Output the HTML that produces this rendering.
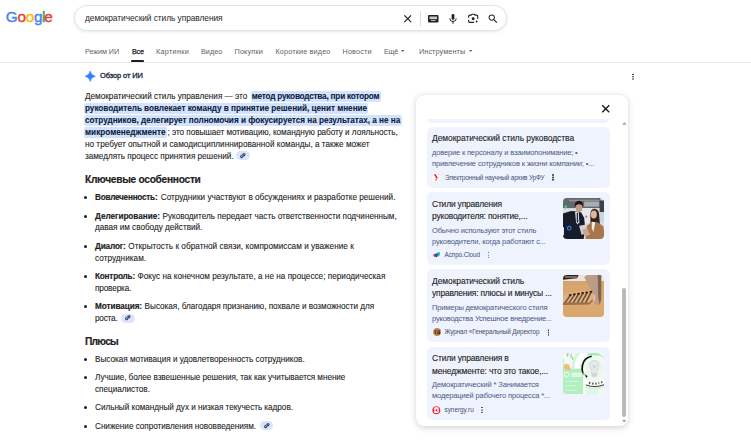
<!DOCTYPE html>
<html lang="ru">
<head>
<meta charset="utf-8">
<title>демократический стиль управления</title>
<style>
*{box-sizing:border-box;margin:0;padding:0}
html,body{width:751px;height:444px;overflow:hidden;background:#fff}
body{font-family:"Liberation Sans",sans-serif;color:#1f1f1f;position:relative}
.abs{position:absolute}
svg{position:absolute;overflow:visible}
.t{position:absolute;white-space:nowrap;line-height:1.117;font-size:10px;color:#1f1f1f}
.q{color:#1f1f1f}
.p,.li{-webkit-text-stroke:0.1px #1f1f1f}
.tab{color:#5f6368}
.act{color:#1f1f1f;-webkit-text-stroke:0.25px #1f1f1f}
.ov{font-weight:400;color:#1f2a44;-webkit-text-stroke:0.32px #1f2a44}
.hl{background:#d3e3fd;font-weight:700;color:#0a1d42;padding:0.8px 1.3px 0.8px 1.2px;margin:0 -1.3px 0 -1.2px;border-radius:2px}
.h{font-weight:700;-webkit-text-stroke:0.2px #1f1f1f}
.li b{font-weight:700;-webkit-text-stroke:0.18px #1f1f1f}
.ct{color:#1f1f1f;-webkit-text-stroke:0.12px #1f1f1f}
.cs{color:#4b5986}
.src{color:#434f74}
#logo span{position:absolute;top:8px;font-size:15.3px;line-height:1.117;-webkit-text-stroke:0.42px currentColor}
#sbox{left:74.4px;top:5.2px;width:433px;height:25.8px;border-radius:13px;background:#fff;border:0.6px solid #e3e5e9;box-shadow:0 1px 3px rgba(32,33,36,.11)}
#div1{left:420.2px;top:10.8px;width:0.7px;height:15px;background:#dadce0}
#act{left:131px;top:59.8px;width:13px;height:2.2px;background:#1f1f1f;border-radius:1.2px 1.2px 0 0}
#tabline{left:0;top:62px;width:751px;height:0.8px;background:#e9ebee}
.dot{position:absolute;left:84px;width:3px;height:3px;border-radius:50%;background:#1f1f1f}
.chip{position:absolute;width:13.6px;height:9px;border-radius:4.5px;background:#dae5fc}
.chip svg{left:4px;top:1.9px;width:5.6px;height:5.2px}
#panel{left:416px;top:94.5px;width:212.3px;height:331.4px;border-radius:8px;background:#fff;box-shadow:0 1.5px 6px rgba(0,0,0,.17),0 0 1px rgba(0,0,0,.08)}
.card{position:absolute;left:426.8px;width:183.3px;background:#eff3fd;border-radius:5.5px}
.img{position:absolute;left:562.7px;width:41.3px;height:41.3px;border-radius:4px;overflow:hidden}
.img svg{left:0;top:0;width:41.3px;height:41.3px}
.kb{position:absolute;width:1.6px;height:1.6px;border-radius:50%;background:#3a4466;box-shadow:0 2.4px 0 #3a4466,0 4.8px 0 #3a4466}
.ico{position:absolute;width:8px;height:8px}

</style>
</head>
<body>
<div id="logo" class="abs" style="left:0;top:0"><span style="left:5.8px;color:#4285f4">G</span><span style="left:17.6px;color:#ea4335">o</span><span style="left:25.8px;color:#fbbc05">o</span><span style="left:34.1px;color:#4285f4">g</span><span style="left:42.1px;color:#34a853">l</span><span style="left:44.3px;color:#ea4335">e</span></div>
<div id="sbox" class="abs"></div>
<!-- clear X -->
<svg style="left:404px;top:14.8px;width:7.4px;height:7.4px" viewBox="0 0 10 10"><path d="M1 1 L9 9 M9 1 L1 9" stroke="#1f1f1f" stroke-width="1.5" fill="none" stroke-linecap="square"/></svg>
<div id="div1" class="abs"></div>
<!-- keyboard -->
<svg style="left:427.5px;top:15px;width:10.5px;height:7.5px" viewBox="0 0 21 15"><rect x="0" y="0" width="21" height="15" rx="2" fill="#202124"/><rect x="3" y="3" width="15" height="5.4" fill="#c9cacc"/><rect x="6" y="10.3" width="9" height="1.6" fill="#d8d9da"/></svg>
<!-- mic -->
<svg style="left:448.5px;top:13.7px;width:8px;height:10.2px" viewBox="0 0 16 20"><rect x="5.2" y="0" width="5.6" height="11.5" rx="2.8" fill="#202124"/><path d="M1.6 8.5 a6.4 6.4 0 0 0 12.8 0" stroke="#202124" stroke-width="1.9" fill="none"/><rect x="7" y="14.5" width="2" height="5" fill="#202124"/></svg>
<!-- lens -->
<svg style="left:467.7px;top:14.2px;width:10.3px;height:9.2px" viewBox="0 0 21 18"><path d="M1.2 7.4 L1.2 4.8 Q1.2 2 4 2 L6.5 2 L8 0.2 L13 0.2 L14.5 2 L17 2 Q19.8 2 19.8 4.8 L19.8 9.6 M1.2 11.4 L1.2 14 Q1.2 16.8 4 16.8 L12.4 16.8" stroke="#202124" stroke-width="2.3" fill="none" stroke-linejoin="round"/><circle cx="10.5" cy="9.2" r="3" fill="#202124"/><circle cx="17.6" cy="15" r="1.9" fill="#202124"/></svg>
<!-- search -->
<svg style="left:488px;top:14.2px;width:9.8px;height:9.2px" viewBox="0 0 20 19"><circle cx="7.6" cy="7.4" r="5.5" stroke="#202124" stroke-width="2.1" fill="none"/><path d="M11.8 11.6 L18.2 17.8" stroke="#202124" stroke-width="2.4" stroke-linecap="butt"/></svg>
<!-- tab arrows -->
<svg style="left:401.4px;top:50.4px;width:3.4px;height:2px" viewBox="0 0 6 3.6"><path d="M0 0 H6 L3 3.6Z" fill="#5f6368"/></svg>
<svg style="left:469px;top:50.4px;width:3.4px;height:2px" viewBox="0 0 6 3.6"><path d="M0 0 H6 L3 3.6Z" fill="#5f6368"/></svg>
<div id="act" class="abs"></div>
<div id="tabline" class="abs"></div>
<!-- sparkle -->
<svg style="left:85.2px;top:70.6px;width:10.4px;height:10.4px" viewBox="0 0 20 20"><defs><linearGradient id="sg" x1="0" y1="1" x2="1" y2="0"><stop offset="0" stop-color="#3186ff"/><stop offset="0.6" stop-color="#2f7df5"/><stop offset="1" stop-color="#4f9bff"/></linearGradient></defs><path d="M10 0 Q11.6 8.4 20 10 Q11.6 11.6 10 20 Q8.4 11.6 0 10 Q8.4 8.4 10 0Z" fill="url(#sg)" stroke="url(#sg)" stroke-width="1.2" stroke-linejoin="round"/></svg>
<!-- page kebab -->
<div class="kb" style="left:632.3px;top:73.6px;width:1.7px;height:1.7px;background:#1f1f1f;box-shadow:0 2.3px 0 #1f1f1f,0 4.6px 0 #1f1f1f"></div>
<!-- bullets -->
<div class="dot" style="top:196px"></div>
<div class="dot" style="top:214.5px"></div>
<div class="dot" style="top:244.6px"></div>
<div class="dot" style="top:274.5px"></div>
<div class="dot" style="top:304.7px"></div>
<div class="dot" style="top:357.8px"></div>
<div class="dot" style="top:376.1px"></div>
<div class="dot" style="top:406.3px"></div>
<div class="dot" style="top:424.5px"></div>
<!-- link chips -->
<div class="chip" style="left:236.2px;top:151.3px"><svg viewBox="0 0 11 10"><path d="M4.6 6.4 L7.6 3.4 M5.2 2.8 L6.4 1.6 a2 2 0 0 1 2.9 2.9 L8.1 5.7 M5.8 7.2 L4.6 8.4 a2 2 0 0 1 -2.9 -2.9 L2.9 4.3" stroke="#404b6c" stroke-width="2.1" fill="none" stroke-linecap="round"/></svg></div>
<div class="chip" style="left:121px;top:313.6px"><svg viewBox="0 0 11 10"><path d="M4.6 6.4 L7.6 3.4 M5.2 2.8 L6.4 1.6 a2 2 0 0 1 2.9 2.9 L8.1 5.7 M5.8 7.2 L4.6 8.4 a2 2 0 0 1 -2.9 -2.9 L2.9 4.3" stroke="#404b6c" stroke-width="2.1" fill="none" stroke-linecap="round"/></svg></div>
<div class="chip" style="left:259.8px;top:421.3px"><svg viewBox="0 0 11 10"><path d="M4.6 6.4 L7.6 3.4 M5.2 2.8 L6.4 1.6 a2 2 0 0 1 2.9 2.9 L8.1 5.7 M5.8 7.2 L4.6 8.4 a2 2 0 0 1 -2.9 -2.9 L2.9 4.3" stroke="#404b6c" stroke-width="2.1" fill="none" stroke-linecap="round"/></svg></div>
<!-- side panel -->
<div id="panel" class="abs"></div>
<div class="card" style="top:116px;height:6.6px;border-radius:0 0 5.5px 5.5px"></div>
<div class="abs" style="left:420px;top:100px;width:200px;height:19px;background:#fff"></div>
<svg style="left:601.8px;top:105.4px;width:7.5px;height:7.5px" viewBox="0 0 10 10"><path d="M1 1 L9 9 M9 1 L1 9" stroke="#1f1f1f" stroke-width="1.9" fill="none" stroke-linecap="square"/></svg>
<div class="card" style="top:126.8px;height:60.8px"></div>
<div class="card" style="top:192px;height:72.6px"></div>
<div class="card" style="top:269.4px;height:73.1px"></div>
<div class="card" style="top:346.8px;height:73.1px"></div>
<!-- scrollbar -->
<svg style="left:621.5px;top:122.4px;width:4.8px;height:2.8px" viewBox="0 0 8 4.8"><path d="M0 4.8 L4 0 L8 4.8Z" fill="#a8a8a8"/></svg>
<div class="abs" style="left:622px;top:288px;width:3.7px;height:128.8px;border-radius:1.9px;background:#b9b9b9"></div>
<svg style="left:621.7px;top:419.8px;width:4.4px;height:2.5px" viewBox="0 0 8 4.8"><path d="M0 0 L4 4.8 L8 0Z" fill="#9c9c9c"/></svg>
<!-- kebabs in cards -->
<div class="kb" style="left:552.3px;top:174px"></div>
<div class="kb" style="left:487.8px;top:251.9px"></div>
<div class="kb" style="left:547.6px;top:329.2px"></div>
<div class="kb" style="left:481.3px;top:406.6px"></div>
<!-- thumbnails -->
<div class="img" style="top:197.7px"><svg viewBox="0 0 41 41"><defs><filter id="b1" x="-10%" y="-10%" width="120%" height="120%"><feGaussianBlur stdDeviation="0.6"/></filter></defs><g filter="url(#b1)"><rect x="-2" y="-2" width="45" height="45" fill="#d9dde1"/><rect x="-2" y="-2" width="45" height="12" fill="#62676c"/><rect x="6" y="1.6" width="32" height="1.6" fill="#8f9499"/><rect x="21" y="3.6" width="15" height="5" fill="#a9aeb3"/><rect x="36.4" y="-1" width="6" height="15" fill="#3c4147"/><rect x="37" y="-1" width="5" height="3.4" fill="#bfe9f4"/><rect x="36.4" y="14" width="6" height="10" fill="#c9d6de"/><rect x="19" y="10" width="10" height="15" fill="#e6e9ec"/><path d="M0 15.5 L8 13 L12.5 13.2 L18 14.5 L21 19.5 L22 30 L20.5 41 L0 41Z" fill="#161d2a"/><path d="M12 13.6 L15.6 13.8 L16.2 24 L14.4 26.4 L13 24Z" fill="#eceff2"/><path d="M13.6 14.6 L14.8 14.6 L15.2 23.4 L14.3 25 L13.6 23.4Z" fill="#1b2742"/><ellipse cx="16" cy="9.6" rx="3.2" ry="4.3" fill="#c09a84"/><path d="M11.6 8.8 Q11.2 3 16 2.8 Q20.6 3.2 19.8 8.6 Q18.6 5.8 15.6 6.2 Q12.8 6.6 11.6 8.8Z" fill="#1f1915"/><path d="M27.2 17 Q27 10.6 31.6 10.8 Q36 11 36 17.6 L36.6 26 L31.6 24 L27.2 24.6Z" fill="#34231b"/><ellipse cx="30.6" cy="16.4" rx="3" ry="4" fill="#dcb69f"/><path d="M22.4 41 L23.4 28 L28.4 23.6 L34.6 24.4 L40 28 L42 41Z" fill="#a9754c"/><path d="M28.6 23.6 L32 24 L30.2 34 L28.6 30Z" fill="#f0ebe5"/><path d="M16 27.6 L23 26.4 L24.6 35 L18.4 36.4Z" fill="#cdd1d6"/><path d="M19 31.4 L24.4 30.4 L27 36.6 L21.4 38.2Z" fill="#c9a48e"/><circle cx="6.2" cy="30" r="1.8" fill="none" stroke="#3c78e6" stroke-width="1.1"/><circle cx="23.2" cy="18.4" r="1.1" fill="#ef5a6a"/><path d="M1.6 6.6 L4.6 8.6 L1.6 10.8Z" fill="#3fd08f"/><rect x="0" y="29" width="1" height="8" fill="#dfe3e6"/></g></svg></div>
<div class="img" style="top:275.3px"><svg viewBox="0 0 41 41"><defs><filter id="b2" x="-10%" y="-10%" width="120%" height="120%"><feGaussianBlur stdDeviation="0.55"/></filter><linearGradient id="wd" x1="0" y1="0" x2="0" y2="1"><stop offset="0" stop-color="#d4a068"/><stop offset="0.6" stop-color="#dcab72"/><stop offset="1" stop-color="#d9a56a"/></linearGradient></defs><g filter="url(#b2)"><rect x="-2" y="-2" width="45" height="45" fill="url(#wd)"/><rect x="-2" y="-2" width="45" height="8" fill="#ece5dc"/><path d="M-1 -1 H16 L14 3.2 L0 4.6Z" fill="#2c211b"/><rect x="2" y="1.4" width="12" height="1.2" fill="#a99"/><path d="M0 6 H41 V9 H0Z" fill="#cfa474" opacity="0.8"/><path d="M21 2 Q24 -1 30 0 L37 -1 L36 12 Q37 22 35.5 30 L32 30 Q30 22 28 15 Q24 8 21 2Z" fill="#bb9d86"/><path d="M34.4 0 L38 0 L38 24 L36.4 30 L35 22Z" fill="#7d6354"/><path d="M30 19 L32 20 L31.6 26 L30 25Z" fill="#e7b8b4"/><g><path d="M0 21 L3 18.6 L26 15.2 L29.6 16.4 L29.6 24 L26 28.4 L0 29Z" fill="#ddb280"/><path d="M1.2 27.6 L6.8 19.6 L8.5 19.8 L2.8 27.6Z" fill="#6b4a34"/><ellipse cx="7.2" cy="19.8" rx="1.5" ry="1" fill="#3a2418"/><path d="M5.3 27.6 L10.9 19.0 L12.6 19.2 L6.9 27.6Z" fill="#6b4a34"/><ellipse cx="11.3" cy="19.2" rx="1.5" ry="1" fill="#3a2418"/><path d="M9.4 27.6 L15.0 18.4 L16.7 18.6 L11.0 27.6Z" fill="#6b4a34"/><ellipse cx="15.4" cy="18.6" rx="1.5" ry="1" fill="#3a2418"/><path d="M13.5 27.6 L19.1 17.7 L20.8 17.9 L15.1 27.6Z" fill="#6b4a34"/><ellipse cx="19.5" cy="17.9" rx="1.5" ry="1" fill="#3a2418"/><path d="M17.6 27.6 L23.2 17.1 L24.9 17.3 L19.2 27.6Z" fill="#6b4a34"/><ellipse cx="23.6" cy="17.3" rx="1.5" ry="1" fill="#3a2418"/><path d="M21.7 27.6 L27.3 16.5 L29.0 16.7 L23.3 27.6Z" fill="#6b4a34"/><ellipse cx="27.7" cy="16.7" rx="1.5" ry="1" fill="#3a2418"/><path d="M0 27.4 L26 27.4 L29.4 23.6 L29.4 26 L26.4 29.2 L0 29.8Z" fill="#8a6040" opacity="0.8"/></g></g></svg></div>
<div class="img" style="top:352.8px"><svg viewBox="0 0 41 41"><defs><filter id="b3" x="-10%" y="-10%" width="120%" height="120%"><feGaussianBlur stdDeviation="0.5"/></filter></defs><g filter="url(#b3)"><rect x="-2" y="-2" width="45" height="45" fill="#f0faf2"/><path d="M24.5 -1 H42 V7 Q40 3.4 36 2.6 L24.5 2.4Z" fill="#a3eab3"/><circle cx="30.5" cy="14.5" r="17" fill="none" stroke="#ffffff" stroke-width="4.6"/><circle cx="30.5" cy="14.5" r="20.6" fill="none" stroke="#d5f3db" stroke-width="2.4"/><rect x="-1" y="15.6" width="21.2" height="27" fill="#b2efbf"/><rect x="-1" y="6" width="2.2" height="10" fill="#bff2ca"/><circle cx="30.8" cy="14.6" r="10.6" fill="#ecf9ef"/><circle cx="31" cy="15" r="7.6" fill="none" stroke="#d9f2de" stroke-width="0.7"/><path d="M28.5 3.2 A11.5 11.5 0 0 0 23.9 23.9" fill="none" stroke="#0d0d0d" stroke-width="1.7"/><path d="M22.6 31.6 Q31.5 35.2 41.5 31.2" fill="none" stroke="#111" stroke-width="0.8"/><g fill="#333" opacity=".8"><rect x="25.6" y="28.6" width="1.5" height="2.4" rx=".5"/><rect x="28.8" y="29.4" width="1.6" height="2" rx=".5"/><rect x="32" y="29.4" width="1.5" height="2" rx=".5"/><rect x="35.2" y="28.6" width="0.8" height="2.4"/><rect x="37.6" y="28" width="1.6" height="2" rx=".5"/></g><path d="M31 7.6 Q26.4 7.8 26.5 12.8 Q26.7 16 28.4 18.2 L28.6 22.6 Q31 24.4 33.4 22.6 L33.6 18.2 Q35.6 16 35.6 12.6 Q35.6 7.8 31 7.6Z" fill="#e6e8ea" stroke="#c6cacd" stroke-width="0.6"/><rect x="28.6" y="20" width="4.8" height="3.4" fill="#d2d5d8"/><path d="M29.6 12.2 L30.4 14.4 L31 12.4 L31.6 14.4 L32.4 12.2" fill="none" stroke="#b6babd" stroke-width="0.45"/><path d="M0.6 12.4 L3.4 10.4 L6.4 12 L7.8 16.6 L4.6 17.2 L1 15.4Z" fill="#f6b97e"/><circle cx="3.6" cy="21.4" r="2.3" fill="none" stroke="#e9fcec" stroke-width="1"/><rect x="8.4" y="19.4" width="10.2" height="4.4" fill="#dff8e4"/><rect x="2" y="27.8" width="14" height="0.9" fill="#d6f7dc"/><rect x="2" y="32" width="10" height="0.9" fill="#d6f7dc"/><rect x="2" y="36.4" width="12" height="0.9" fill="#d6f7dc"/><rect x="22" y="36" width="13" height="5" fill="#e2f6e6"/><path d="M4.6 1 V3.6 M3.6 1 H5.8 M8 0.8 V5 M9.6 4 V7" stroke="#2e7d46" stroke-width="0.55" opacity=".8"/><rect x="20.2" y="15.6" width="2.2" height="27" fill="#fff" opacity=".8"/></g></svg></div>
<!-- favicons -->
<svg class="ico" style="left:432px;top:172.8px;width:8.6px;height:9px" viewBox="0 0 17 18"><circle cx="8.4" cy="9" r="8.4" fill="#fff"/><path d="M4 2.4 L6.8 2.2 L11.6 10.2 L8.6 11.4 L6.6 7.6Z" fill="#e3142c"/><path d="M11.4 10 L9.4 14.4 L5.2 16.6 L6.6 13.6 L4.6 13.4 L8.8 11Z" fill="#f5921e"/><circle cx="13.2" cy="3.2" r="1" fill="#f08a9a"/></svg>
<svg class="ico" style="left:431.8px;top:251px;width:9.6px;height:7.6px" viewBox="0 0 19 15"><path d="M4 6 L10 1.4 L17.6 1.6 L15.4 11.2 L8 13.6 L3 12Z" fill="#fff"/><path d="M8.4 4.6 L10.6 2.6 L16.6 2.6 L14.6 10.4 L10.6 11.6Z" fill="#1fcf83"/><path d="M2.4 8.6 Q2.6 5.8 5.6 5.6 L7 5.6 L7.4 11.6 L5.2 11.8 Q2.6 11.4 2.4 8.6Z" fill="#f03a4a"/><path d="M5.8 5.6 L12.2 5.6 L9.6 12.4 L7 12.4Z" fill="#1b3fe0"/></svg>
<svg class="ico" style="left:432.6px;top:328.2px;width:8.2px;height:8.2px" viewBox="0 0 16 16"><circle cx="8" cy="8" r="8.8" fill="#fff"/><circle cx="8" cy="8" r="7.8" fill="#bd8351"/><path d="M3.6 5 H7.2 V6.4 H5.2 V11 H3.6Z M8.2 11 V9.6 H8.8 Q9.3 8 9.4 5 H13 V9.6 H13.6 V12.4 H12.4 V11 H9.2 V12.4 H8.2Z M10.6 6.4 Q10.5 8.4 10.2 9.6 H11.6 V6.4Z" fill="#2a1c12"/></svg>
<svg class="ico" style="left:432.1px;top:405.5px;width:8.7px;height:8.4px" viewBox="0 0 16 16"><circle cx="8" cy="8" r="8.6" fill="#fff"/><circle cx="8" cy="8" r="7.6" fill="#ee2a3a"/><rect x="4" y="2.6" width="8.4" height="10.8" rx="1.6" fill="#fff"/><path d="M5.4 8 L10.6 4.6 L9.2 8 L10.6 11.4Z" fill="#e5182c"/></svg>

<div class="t q" id="t0" style="left:85.00px;top:14.00px;font-size:8.40px;letter-spacing:-0.069px">демократический стиль управления</div>
<div class="t tab" id="t1" style="left:85.00px;top:48.00px;font-size:7.25px;letter-spacing:-0.099px">Режим ИИ</div>
<div class="t tab act" id="t2" style="left:131.90px;top:48.00px;font-size:7.25px;letter-spacing:-0.215px">Все</div>
<div class="t tab" id="t3" style="left:156.00px;top:48.00px;font-size:7.25px;letter-spacing:0.283px">Картинки</div>
<div class="t tab" id="t4" style="left:201.00px;top:48.00px;font-size:7.25px;letter-spacing:0.013px">Видео</div>
<div class="t tab" id="t5" style="left:234.50px;top:48.00px;font-size:7.25px;letter-spacing:0.175px">Покупки</div>
<div class="t tab" id="t6" style="left:275.50px;top:48.00px;font-size:7.25px;letter-spacing:0.147px">Короткие видео</div>
<div class="t tab" id="t7" style="left:342.50px;top:48.00px;font-size:7.25px;letter-spacing:0.168px">Новости</div>
<div class="t tab" id="t8" style="left:384.00px;top:48.00px;font-size:7.25px;letter-spacing:-0.280px">Ещё</div>
<div class="t tab" id="t9" style="left:419.00px;top:48.00px;font-size:7.25px;letter-spacing:0.094px">Инструменты</div>
<div class="t ov" id="t10" style="left:100.00px;top:72.00px;font-size:7.50px;letter-spacing:-0.119px">Обзор от ИИ</div>
<div class="t p" id="t11" style="left:85.00px;top:92.00px;font-size:8.20px;letter-spacing:-0.003px">Демократический стиль управления — это</div>
<div class="t p" id="t12" style="left:251.70px;top:92.00px;font-size:8.20px;letter-spacing:-0.200px"><span class="hl">метод руководства, при котором</span></div>
<div class="t p" id="t13" style="left:85.00px;top:104.00px;font-size:8.20px;letter-spacing:-0.034px"><span class="hl">руководитель вовлекает команду в принятие решений, ценит мнение</span></div>
<div class="t p" id="t14" style="left:85.00px;top:116.00px;font-size:8.20px;letter-spacing:-0.021px"><span class="hl">сотрудников, делегирует полномочия и фокусируется на результатах, а не на</span></div>
<div class="t p" id="t15" style="left:85.00px;top:128.00px;font-size:8.20px;letter-spacing:0.020px"><span class="hl">микроменеджменте</span></div>
<div class="t p" id="t16" style="left:167.60px;top:128.00px;font-size:8.20px;letter-spacing:-0.055px">; это повышает мотивацию, командную работу и лояльность,</div>
<div class="t p" id="t17" style="left:85.00px;top:140.00px;font-size:8.20px;letter-spacing:0.007px">но требует опытной и самодисциплиннированной команды, а также может</div>
<div class="t p" id="t18" style="left:85.00px;top:152.00px;font-size:8.20px;letter-spacing:-0.027px">замедлять процесс принятия решений.</div>
<div class="t h" id="t19" style="left:85.00px;top:174.00px;font-size:10.20px;letter-spacing:-0.285px">Ключевые особенности</div>
<div class="t li" id="t20" style="left:95.00px;top:193.00px;font-size:8.20px;letter-spacing:-0.236px"><b>Вовлеченность:</b></div>
<div class="t li" id="t21" style="left:160.75px;top:193.00px;font-size:8.20px;letter-spacing:0.001px">Сотрудники участвуют в обсуждениях и разработке решений.</div>
<div class="t li" id="t22" style="left:95.00px;top:212.00px;font-size:8.20px;letter-spacing:-0.030px"><b>Делегирование:</b></div>
<div class="t li" id="t23" style="left:162.50px;top:212.00px;font-size:8.20px;letter-spacing:-0.022px">Руководитель передает часть ответственности подчиненным,</div>
<div class="t li" id="t24" style="left:95.00px;top:223.00px;font-size:8.20px;letter-spacing:-0.025px">давая им свободу действий.</div>
<div class="t li" id="t25" style="left:95.00px;top:242.00px;font-size:8.20px;letter-spacing:-0.137px"><b>Диалог:</b></div>
<div class="t li" id="t26" style="left:128.25px;top:242.00px;font-size:8.20px;letter-spacing:0.037px">Открытость к обратной связи, компромиссам и уважение к</div>
<div class="t li" id="t27" style="left:95.00px;top:254.00px;font-size:8.20px;letter-spacing:0.041px">сотрудникам.</div>
<div class="t li" id="t28" style="left:95.00px;top:272.00px;font-size:8.20px;letter-spacing:-0.198px"><b>Контроль:</b></div>
<div class="t li" id="t29" style="left:137.50px;top:272.00px;font-size:8.20px;letter-spacing:0.012px">Фокус на конечном результате, а не на процессе; периодическая</div>
<div class="t li" id="t30" style="left:95.00px;top:284.00px;font-size:8.20px;letter-spacing:-0.145px">проверка.</div>
<div class="t li" id="t31" style="left:95.00px;top:302.00px;font-size:8.20px;letter-spacing:-0.069px"><b>Мотивация:</b></div>
<div class="t li" id="t32" style="left:144.60px;top:302.00px;font-size:8.20px;letter-spacing:-0.026px">Высокая, благодаря признанию, похвале и возможности для</div>
<div class="t li" id="t33" style="left:95.00px;top:314.00px;font-size:8.20px;letter-spacing:-0.205px">роста.</div>
<div class="t h" id="t34" style="left:85.00px;top:336.00px;font-size:10.20px;letter-spacing:-0.737px">Плюсы</div>
<div class="t li" id="t35" style="left:95.00px;top:355.00px;font-size:8.20px;letter-spacing:-0.015px">Высокая мотивация и удовлетворенность сотрудников.</div>
<div class="t li" id="t36" style="left:95.00px;top:373.00px;font-size:8.20px;letter-spacing:-0.061px">Лучшие, более взвешенные решения, так как учитывается мнение</div>
<div class="t li" id="t37" style="left:95.00px;top:385.00px;font-size:8.20px;letter-spacing:-0.021px">специалистов.</div>
<div class="t li" id="t38" style="left:95.00px;top:403.00px;font-size:8.20px;letter-spacing:-0.037px">Сильный командный дух и низкая текучесть кадров.</div>
<div class="t li" id="t39" style="left:95.00px;top:422.00px;font-size:8.20px;letter-spacing:-0.036px">Снижение сопротивления нововведениям.</div>
<div class="t ct" id="t40" style="left:432.00px;top:134.00px;font-size:8.45px;letter-spacing:-0.056px">Демократический стиль руководства</div>
<div class="t cs" id="t41" style="left:432.00px;top:149.00px;font-size:7.50px;letter-spacing:-0.163px">доверие к персоналу и взаимопонимание; •</div>
<div class="t cs" id="t42" style="left:432.00px;top:160.00px;font-size:7.50px;letter-spacing:-0.110px">привлечение сотрудников к жизни компании; •...</div>
<div class="t src" id="t43" style="left:445.00px;top:174.00px;font-size:6.40px;letter-spacing:-0.138px">Электронный научный архив УрФУ</div>
<div class="t ct" id="t44" style="left:432.00px;top:200.00px;font-size:8.45px;letter-spacing:-0.174px">Стили управления</div>
<div class="t ct" id="t45" style="left:432.00px;top:212.00px;font-size:8.45px;letter-spacing:-0.159px">руководителя: понятие,...</div>
<div class="t cs" id="t46" style="left:432.00px;top:227.00px;font-size:7.50px;letter-spacing:-0.148px">Обычно используют этот стиль</div>
<div class="t cs" id="t47" style="left:432.00px;top:238.00px;font-size:7.50px;letter-spacing:-0.116px">руководители, когда работают с...</div>
<div class="t src" id="t48" style="left:444.50px;top:251.00px;font-size:6.40px;letter-spacing:-0.096px">Аспро.Cloud</div>
<div class="t ct" id="t49" style="left:432.00px;top:277.00px;font-size:8.45px;letter-spacing:-0.055px">Демократический стиль</div>
<div class="t ct" id="t50" style="left:432.00px;top:289.00px;font-size:8.45px;letter-spacing:-0.187px">управления: плюсы и минусы ...</div>
<div class="t cs" id="t51" style="left:432.00px;top:304.00px;font-size:7.50px;letter-spacing:-0.140px">Примеры демократического стиля</div>
<div class="t cs" id="t52" style="left:432.00px;top:315.00px;font-size:7.50px;letter-spacing:-0.172px">руководства Успешное внедрение...</div>
<div class="t src" id="t53" style="left:444.50px;top:328.00px;font-size:6.40px;letter-spacing:-0.105px">Журнал «Генеральный Директор</div>
<div class="t ct" id="t54" style="left:432.00px;top:354.00px;font-size:8.45px;letter-spacing:-0.159px">Стили управления в</div>
<div class="t ct" id="t55" style="left:432.00px;top:367.00px;font-size:8.45px;letter-spacing:-0.120px">менеджменте: что это такое,...</div>
<div class="t cs" id="t56" style="left:432.00px;top:381.00px;font-size:7.50px;letter-spacing:-0.105px">Демократический * Занимается</div>
<div class="t cs" id="t57" style="left:432.00px;top:392.00px;font-size:7.50px;letter-spacing:-0.129px">модерацией рабочего процесса *...</div>
<div class="t src" id="t58" style="left:444.50px;top:406.00px;font-size:6.40px;letter-spacing:-0.016px">synergy.ru</div>
</body>
</html>
